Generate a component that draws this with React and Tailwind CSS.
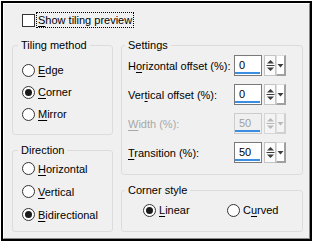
import React from "react";

function Radio({ checked, label, u, rest }) {
  return (
    <div className="flex items-center">
      <span className="w-[13px] h-[13px] rounded-full border border-[#333333] bg-white flex items-center justify-center shrink-0">
        {checked && <span className="w-[7px] h-[7px] rounded-full bg-[#1a1a1a]" />}
      </span>
      <span className="ml-[3px]">
        {label}
        <u className="underline underline-offset-[2px]">{u}</u>
        {rest}
      </span>
    </div>
  );
}

function UpDown({ disabled }) {
  const c = disabled ? "#b8b8b8" : "#3c3c3c";
  return (
    <svg width="9" height="15" viewBox="0 0 9 15">
      <polygon points="1,5.5 4.5,2 8,5.5" fill={c} />
      <rect x="0.5" y="7" width="8" height="1" fill={c} />
      <polygon points="1,9.5 8,9.5 4.5,13" fill={c} />
    </svg>
  );
}

function Drop({ disabled }) {
  const c = disabled ? "#b8b8b8" : "#3c3c3c";
  return (
    <svg width="7" height="15" viewBox="0 0 7 15">
      <polygon points="0.5,6 6.5,6 3.5,9.5" fill={c} />
    </svg>
  );
}

function Spin({ value, disabled }) {
  return (
    <div className="flex items-center">
      <div
        className={
          "w-[28px] h-[21px] border flex flex-col " +
          (disabled
            ? "border-[#cccccc] bg-[#f0f0f0] text-[#a0a0a0]"
            : "border-[#7a7a7a] bg-white text-black")
        }
      >
        <div className="flex-1 flex items-center pl-[4px] pt-[1px]">{value}</div>
        <div className="h-[2px] mb-[1px] mr-[1px] bg-[#3a8de0]" />
      </div>
      <div className="ml-[2px] flex h-[21px]">
        <div
          className={
            "w-[12px] h-[21px] border flex items-center justify-center " +
            (disabled ? "border-[#d6d6d6] bg-[#f4f4f4]" : "border-[#c4c4c4] bg-[#fbfbfb]")
          }
        >
          <UpDown disabled={disabled} />
        </div>
        <div
          className={
            "w-[10px] h-[21px] border-t border-l border-r-2 border-b-2 flex items-center justify-center " +
            (disabled
              ? "border-t-[#e0e0e0] border-l-[#e0e0e0] border-r-[#d0d0d0] border-b-[#d0d0d0] bg-[#f4f4f4]"
              : "border-t-[#dcdcdc] border-l-[#dcdcdc] border-r-[#a0a0a0] border-b-[#a0a0a0] bg-white")
          }
        >
          <Drop disabled={disabled} />
        </div>
      </div>
    </div>
  );
}

function SpinRow({ pre, u, post, value, disabled }) {
  return (
    <div className="h-[29px] flex items-center">
      <div className={"w-[112px] pl-[6px] " + (disabled ? "text-[#a8a8a8]" : "")}>
        {pre}
        <u className="underline underline-offset-[2px]">{u}</u>
        {post}
      </div>
      <Spin value={value} disabled={disabled} />
    </div>
  );
}

export default function App() {
  return (
    <div
      className="w-[313px] h-[242px] bg-white p-[1px] text-[11px] leading-[14px] text-black"
      style={{ fontFamily: '"Liberation Sans", Arial, sans-serif' }}
    >
      <div className="w-full h-full border-2 border-black">
        <div className="w-full h-full border border-t-white border-l-white border-r-[#8a8a8a] border-b-[#8a8a8a] bg-[#f0f0f0] flex flex-col">
          {/* checkbox row */}
          <div className="pt-[8px] pl-[18px] flex items-center h-[24px]">
            <span className="w-[13px] h-[13px] border border-[#333333] bg-white shrink-0" />
            <span className="ml-[1px] h-[16px] px-[1px] border border-dotted border-black flex items-center">
              <u className="underline underline-offset-[2px]">S</u>how tiling preview
            </span>
          </div>

          <div className="mt-[10px] pl-[8px] flex gap-[8px]">
            {/* left column */}
            <div className="w-[101px] flex flex-col gap-[8px]">
              <fieldset className="h-[97px] border border-[#dcdcdc] rounded-[3px]">
                <legend className="ml-[5px] px-[3px] leading-[14px]">Tiling method</legend>
                <div className="pl-[9px] pt-[7px] flex flex-col">
                  <div className="h-[22px] flex items-center">
                    <Radio label="" u="E" rest="dge" />
                  </div>
                  <div className="h-[22px] flex items-center">
                    <Radio checked label="" u="C" rest="orner" />
                  </div>
                  <div className="h-[22px] flex items-center">
                    <Radio label="" u="M" rest="irror" />
                  </div>
                </div>
              </fieldset>
              <fieldset className="h-[89px] border border-[#dcdcdc] rounded-[3px]">
                <legend className="ml-[5px] px-[3px] leading-[14px]">Direction</legend>
                <div className="pl-[9px] flex flex-col">
                  <div className="h-[23px] flex items-center">
                    <Radio label="" u="H" rest="orizontal" />
                  </div>
                  <div className="h-[23px] flex items-center">
                    <Radio label="" u="V" rest="ertical" />
                  </div>
                  <div className="h-[23px] flex items-center">
                    <Radio checked label="" u="B" rest="idirectional" />
                  </div>
                </div>
              </fieldset>
            </div>

            {/* right column */}
            <div className="w-[182px] flex flex-col gap-[8px]">
              <fieldset className="h-[137px] border border-[#dcdcdc] rounded-[3px]">
                <legend className="ml-[3px] px-[3px] leading-[14px]">Settings</legend>
                <div className="-mt-[1px] flex flex-col">
                  <SpinRow pre="H" u="o" post="rizontal offset (%):" value="0" />
                  <SpinRow pre="Ver" u="t" post="ical offset (%):" value="0" />
                  <SpinRow pre="" u="W" post="idth (%):" value="50" disabled />
                  <SpinRow pre="" u="T" post="ransition (%):" value="50" />
                </div>
              </fieldset>
              <fieldset className="h-[49px] border border-[#dcdcdc] rounded-[3px]">
                <legend className="ml-[3px] px-[3px] leading-[14px]">Corner style</legend>
                <div className="pl-[21px] pt-[2px] h-[24px] flex items-center">
                  <div className="w-[84px]">
                    <Radio checked label="" u="L" rest="inear" />
                  </div>
                  <Radio label="C" u="u" rest="rved" />
                </div>
              </fieldset>
            </div>
          </div>
        </div>
      </div>
    </div>
  );
}
